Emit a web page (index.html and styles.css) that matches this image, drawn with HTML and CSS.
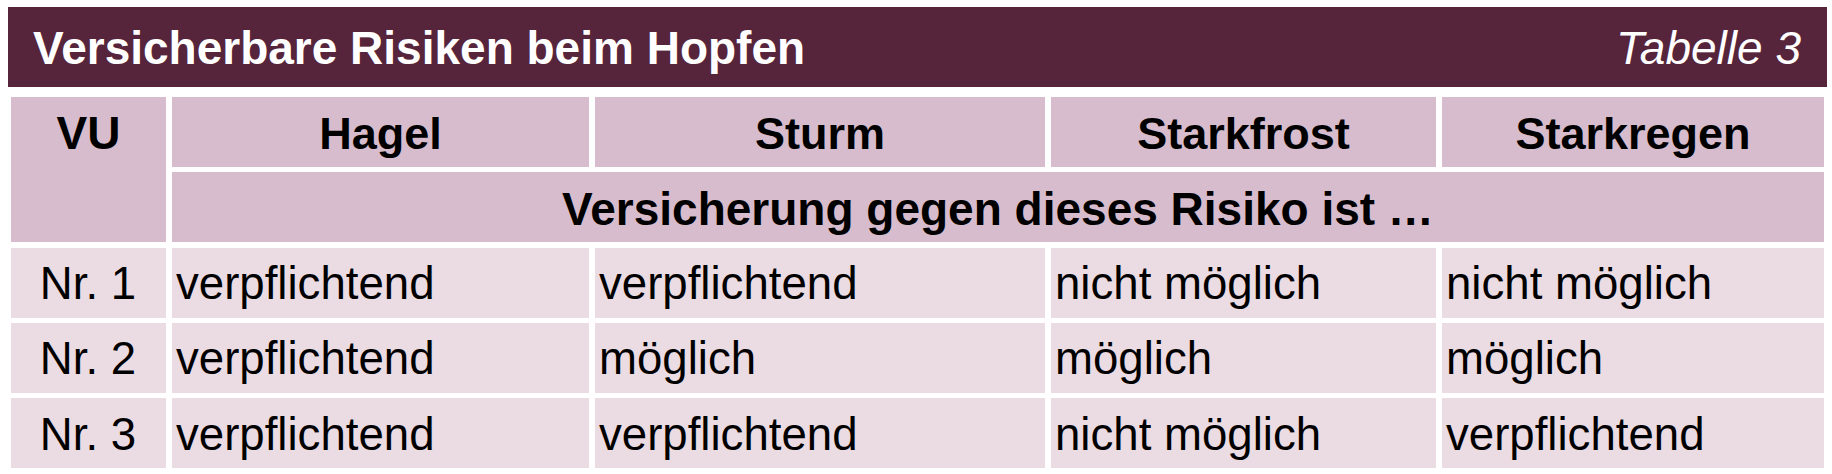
FILE: index.html
```html
<!DOCTYPE html>
<html lang="de">
<head>
<meta charset="utf-8">
<title>Versicherbare Risiken beim Hopfen</title>
<link rel="stylesheet" href="styles.css">
</head>
<body>
<div class="page">
  <div class="titlebar">
    <span class="title">Versicherbare Risiken beim Hopfen</span>
    <span class="tag">Tabelle 3</span>
  </div>
  <div class="grid">
    <div class="cell head vu"><span class="vu-label">VU</span></div>
    <div class="cell head center">Hagel</div>
    <div class="cell head center">Sturm</div>
    <div class="cell head center">Starkfrost</div>
    <div class="cell head center">Starkregen</div>
    <div class="cell head center span">Versicherung gegen dieses Risiko ist …</div>

    <div class="cell data center">Nr. 1</div>
    <div class="cell data">verpflichtend</div>
    <div class="cell data">verpflichtend</div>
    <div class="cell data">nicht möglich</div>
    <div class="cell data">nicht möglich</div>

    <div class="cell data center">Nr. 2</div>
    <div class="cell data">verpflichtend</div>
    <div class="cell data">möglich</div>
    <div class="cell data">möglich</div>
    <div class="cell data">möglich</div>

    <div class="cell data center">Nr. 3</div>
    <div class="cell data">verpflichtend</div>
    <div class="cell data">verpflichtend</div>
    <div class="cell data">nicht möglich</div>
    <div class="cell data">verpflichtend</div>
  </div>
</div>
</body>
</html>
```

FILE: styles.css
```css
html, body {
  margin: 0;
  padding: 0;
  background: #ffffff;
}

body {
  font-family: "Liberation Sans", Arial, sans-serif;
  color: #000000;
}

.page {
  padding: 7px 5px 0 8px;
  width: 1819px;
}

.titlebar {
  height: 79px;
  background: #56243b;
  color: #ffffff;
  display: flex;
  align-items: center;
  justify-content: space-between;
  padding: 1px 26px 0 25px;
}

.title {
  font-weight: bold;
  font-size: 46px;
}

.tag {
  font-style: italic;
  font-size: 46px;
}

.grid {
  margin: 10px 3px 0 3px;
  display: grid;
  grid-template-columns: 155px 417px 450px 385px 382px;
  grid-auto-rows: 70px;
  column-gap: 6px;
  row-gap: 5.25px;
}

.cell {
  display: flex;
  align-items: center;
  padding: 3px 5px 0 5px;
  white-space: nowrap;
}

.head {
  background: #d7bccd;
  font-weight: bold;
  font-size: 45px;
}

.span {
  grid-column: 2 / 6;
  font-size: 46px;
}

.data {
  background: #ebdbe3;
  font-size: 45.6px;
  padding-left: 4px;
}

.center {
  justify-content: center;
}

.vu {
  grid-row: span 2;
  justify-content: center;
  align-items: flex-start;
}

.vu-label {
  display: block;
  height: 70px;
  line-height: 67px;
  font-size: 46px;
}
```
